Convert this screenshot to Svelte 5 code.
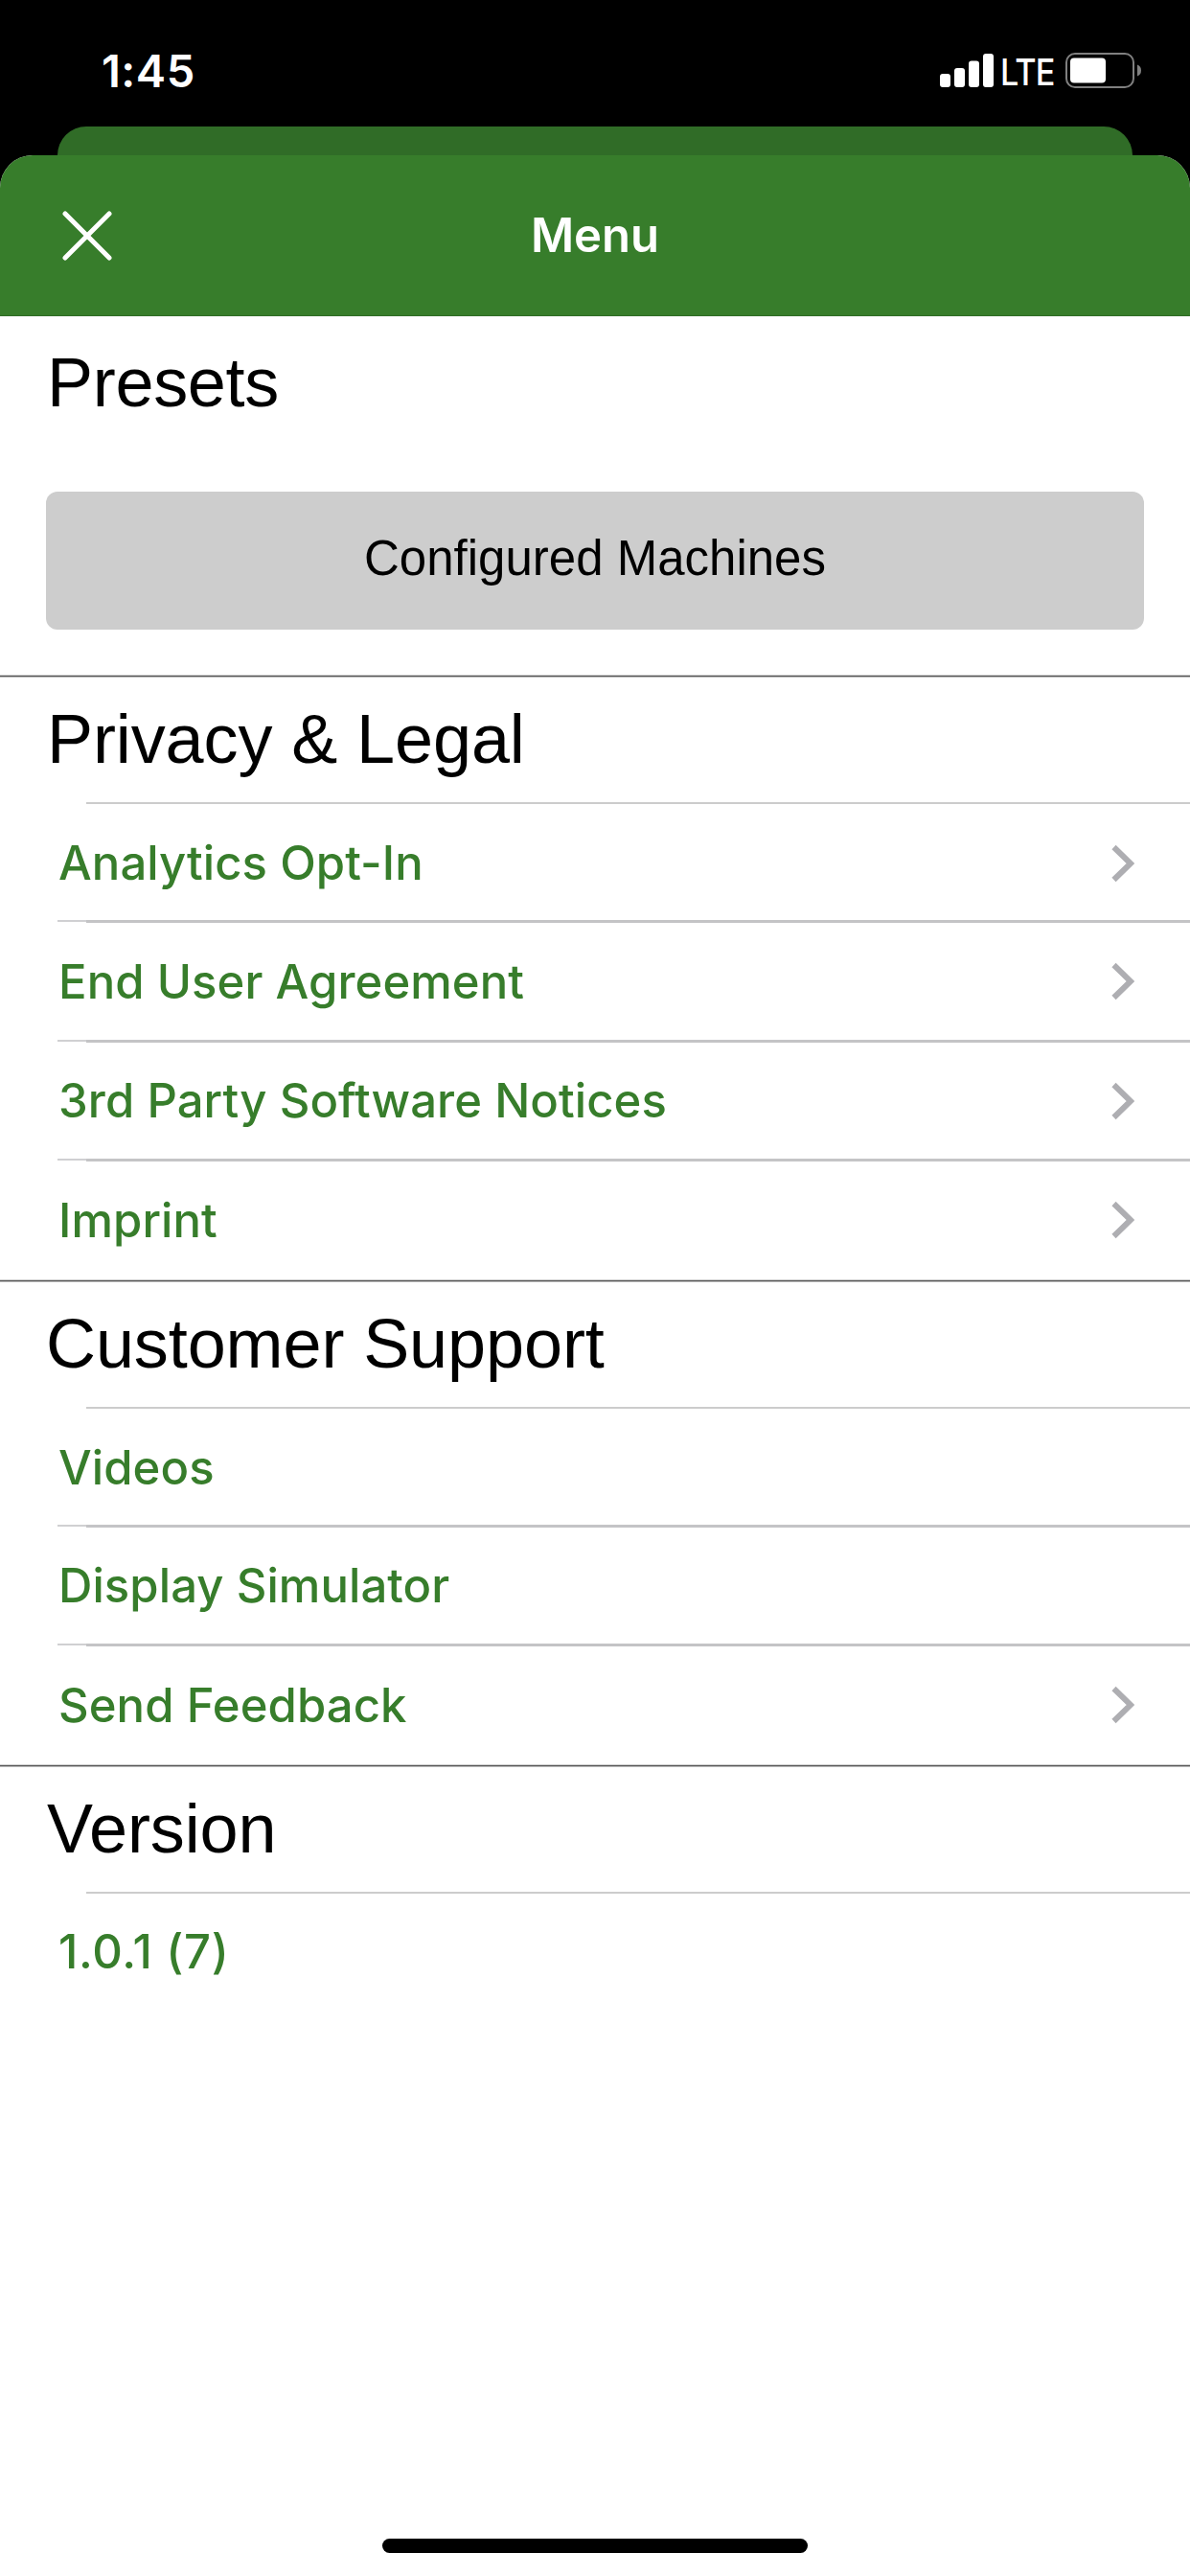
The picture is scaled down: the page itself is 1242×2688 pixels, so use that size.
<script>
  const sections = [
    { title: 'Privacy & Legal', key: 'legal', items: [
      { label: 'Analytics Opt-In', link: true },
      { label: 'End User Agreement', link: true },
      { label: '3rd Party Software Notices', link: true },
      { label: 'Imprint', link: true }
    ] },
    { title: 'Customer Support', key: 'support', items: [
      { label: 'Videos', link: false },
      { label: 'Display Simulator', link: false },
      { label: 'Send Feedback', link: true }
    ] },
    { title: 'Version', key: 'version', items: [
      { label: '1.0.1 (7)', link: false }
    ] }
  ];
</script>

<div class="screen">
  <div class="status">
    <span class="time">1:45</span>
    <div class="indicators">
      <svg class="signal" width="56" height="35" viewBox="0 0 56 35" fill="#fff">
        <rect x="0" y="21" width="11" height="14" rx="3" />
        <rect x="15" y="15" width="11" height="20" rx="3" />
        <rect x="30" y="7.500" width="11" height="27.500" rx="3" />
        <rect x="45" y="0" width="11" height="35" rx="3" />
      </svg>
      <span class="lte">LTE</span>
      <svg class="battery" width="79" height="37" viewBox="0 0 79 37">
        <rect x="1" y="1" width="70" height="35" rx="9" fill="none" stroke="#808080" stroke-width="2" />
        <rect x="5" y="5.500" width="37" height="26" rx="4" fill="#fff" />
        <path d="M75 12.500q4 1.500 4 6t-4 6z" fill="#808080" />
      </svg>
    </div>
  </div>
  <div class="behind"></div>
  <main class="sheet">
    <header>
      <button class="close" aria-label="Close">
        <svg width="52" height="52" viewBox="0 0 52 52" fill="none" stroke="#fff" stroke-width="5" stroke-linecap="round">
          <path d="M3 3L49 49M49 3L3 49" />
        </svg>
      </button>
      <span class="title">Menu</span>
    </header>
    <section class="presets">
      <h2>Presets</h2>
      <button class="machines"><span>Configured Machines</span></button>
    </section>
    {#each sections as section (section.key)}
      <section class="group {section.key}">
        <h2>{section.title}</h2>
        <ul>
          {#each section.items as item (item.label)}
            <li>
              <span>{item.label}</span>
              {#if item.link}
                <svg width="24" height="40" viewBox="0 0 24 40" fill="none" stroke="#aeaeb2" stroke-width="6">
                  <path d="M2.500 3L20 20L2.500 37" />
                </svg>
              {/if}
            </li>
          {/each}
        </ul>
      </section>
    {/each}
    <div class="home"></div>
  </main>
</div>

<style>
  :global(body) { background: #000; }
  .screen {
    width: 1242px;
    height: 2688px;
    display: flex;
    flex-direction: column;
    background: #000;
    font-family: Inter, 'Liberation Sans', sans-serif;
    overflow: hidden;
  }
  button { border: 0; padding: 0; background: none; font: inherit; color: inherit; }
  .status {
    height: 132px;
    flex: none;
    box-sizing: border-box;
    padding: 0 51px 0 106px;
    display: flex;
    justify-content: space-between;
    color: #fff;
  }
  .time { font-size: 47px; font-weight: 600; line-height: 60px; margin-top: 44px; letter-spacing: 0.5px; }
  .indicators { display: flex; align-items: flex-start; }
  .signal { margin-top: 56px; }
  .lte {
    width: 57px;
    margin: 50px 11px 0 7px;
    font-size: 38px;
    font-weight: 500;
    line-height: 50px;
    letter-spacing: -1px;
    white-space: nowrap;
    transform: scaleX(0.9);
    transform-origin: 0 50%;
  }
  .battery { margin-top: 55px; }
  .behind { height: 30px; flex: none; margin: 0 60px; background: #306c27; border-radius: 30px 30px 0 0; }
  .sheet {
    flex: 1;
    display: flex;
    flex-direction: column;
    background: #fff;
    border-radius: 34px 34px 0 0;
    overflow: hidden;
  }
  header {
    height: 168px;
    flex: none;
    box-sizing: border-box;
    display: grid;
    grid-template-columns: 180px 1fr 180px;
    align-items: center;
    background: #377d2b;
    border-bottom: 1px solid #2f6b25;
    color: #fff;
  }
  .close { justify-self: start; margin-left: 65px; display: flex; }
  .title { text-align: center; font-size: 49px; font-weight: 600; }
  h2 {
    margin: 0;
    padding-left: 49px;
    font: 400 72px/82px 'Liberation Sans', Arial, sans-serif;
    letter-spacing: -0.3px;
    color: #000;
  }
  .presets { height: 374px; flex: none; box-sizing: border-box; padding-top: 28px; }
  .machines {
    display: flex;
    align-items: center;
    justify-content: center;
    margin: 73px 48px 0;
    width: 1146px;
    height: 144px;
    border-radius: 12px;
    background: #cdcdcd;
    font: 400 51px/60px 'Liberation Sans', Arial, sans-serif;
  }
  .machines span { margin-top: -4px; }
  /* Hairline between sections: a dark core with a soft edge on both sides */
  .group { background: linear-gradient(#ccc 0 1px, #555 1px 2px, #bbb 2px 3px) 0 0 / 100% 3px no-repeat; }
  .group h2 { height: 133px; box-sizing: border-box; padding-top: 26px; letter-spacing: -0.100px; }
  .support h2 { padding-left: 48px; }
  ul { list-style: none; margin: 0; padding: 0; }
  li {
    height: 124.500px;
    box-sizing: border-box;
    padding: 4px 58px 0 61px;
    display: flex;
    align-items: center;
    justify-content: space-between;
    color: #377d2b;
    font-size: 49px;
    font-weight: 500;
    letter-spacing: 0.08px;
    background: linear-gradient(#ccc, #ccc) 90px 0 / 100% 2px no-repeat;
  }
  li:last-child { height: 125.500px; padding-top: 3px; }
  li:first-child { height: 123px; }
  .version li { letter-spacing: 0.700px; }
  li + li {
    background:
      linear-gradient(#c4c4c6, #c4c4c6) 90px 0 / 100% 3px no-repeat,
      linear-gradient(#d0d0d2, #d0d0d2) 60px 0 / 100% 2px no-repeat;
  }
  .home { width: 444px; height: 15px; border-radius: 8px; background: #000; margin: auto auto 24px; }
</style>
